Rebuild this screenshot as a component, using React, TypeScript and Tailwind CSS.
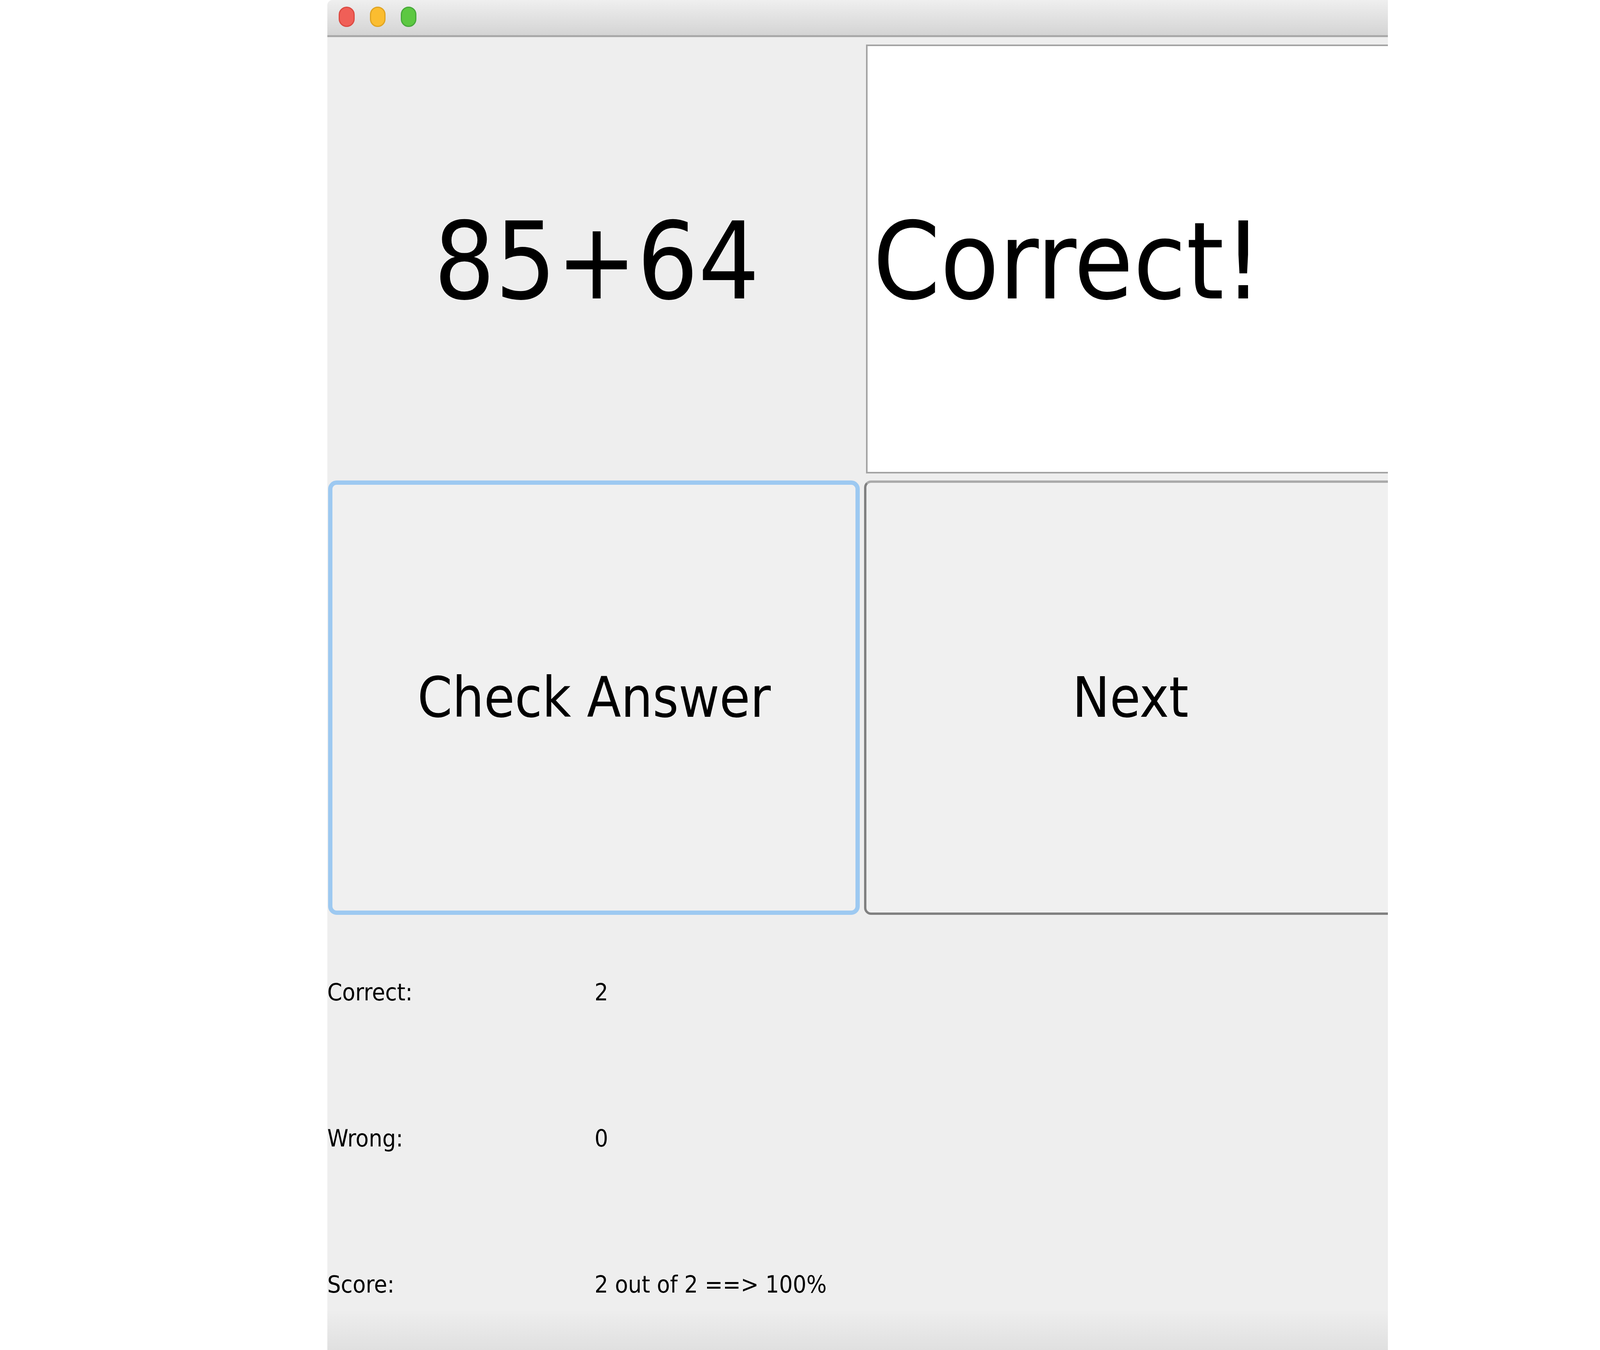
const font = "font-['DejaVu_Sans_Condensed',_'DejaVu_Sans',_'Liberation_Sans',_sans-serif]";

function TrafficLights() {
  return (
    <div className="flex w-full items-center gap-[1.45%] pl-[1.1%]">
      <span className="h-[52px] w-[1.5%] rounded-full border-[3px] border-[#dc4a42] bg-[#f05f57]" />
      <span className="h-[52px] w-[1.5%] rounded-full border-[3px] border-[#e0a422] bg-[#fbbd30]" />
      <span className="h-[52px] w-[1.5%] rounded-full border-[3px] border-[#47a93a] bg-[#5cc841]" />
    </div>
  );
}

function StatRow({ label, value }: { label: string; value: string }) {
  return (
    <div className="grid h-[374px] grid-cols-[25.2%_1fr] items-center text-[61px] text-black">
      <span>{label}</span>
      <span>{value}</span>
    </div>
  );
}

export default function App() {
  return (
    <div className={`flex h-screen w-full overflow-hidden bg-white ${font}`}>
      <div className="ml-[20.45%] flex h-full w-[66.3%] shrink-0 flex-col overflow-hidden rounded-tl-[14px] bg-[linear-gradient(to_bottom,#eeeeee_0%,#eeeeee_97%,#e0e0e0_100%)]">
        {/* title bar */}
        <div className="flex h-[95px] shrink-0 items-center border-b-[5px] border-[#a9a9a9] bg-[linear-gradient(to_bottom,#efefef,#d4d4d4)] pb-[4px]">
          <TrafficLights />
        </div>

        {/* question + feedback */}
        <div className="mt-[19px] flex h-[1098px] shrink-0">
          <div className="flex w-[50.8%] shrink-0 items-center justify-center pt-[14px] text-[274px] leading-none text-black">
            85+64
          </div>
          <div className="flex h-full w-[50.6%] shrink-0 items-center border-[4px] border-[#a3a3a3] bg-white pl-[0.5%] pt-[14px] text-[274px] leading-none text-black">
            Correct!
          </div>
        </div>

        {/* buttons */}
        <div className="mt-[18px] flex h-[1112px] shrink-0 gap-[0.4%] pl-[0.1%]">
          <button className="flex w-[50.17%] shrink-0 items-center justify-center rounded-[22px] border-[11px] border-[#9dc9f1] bg-[#f0f0f0] text-[142px] leading-none text-black">
            Check Answer
          </button>
          <button className="flex w-[50.26%] shrink-0 items-center justify-center rounded-[18px] border-[6px] border-[#808080] border-t-[#aaaaaa] bg-[#f0f0f0] text-[142px] leading-none text-black">
            Next
          </button>
        </div>

        {/* stats */}
        <div className="mt-[11px] flex flex-col">
          <StatRow label="Correct:" value="2" />
          <StatRow label="Wrong:" value="0" />
          <StatRow label="Score:" value="2 out of 2 ==> 100%" />
        </div>
      </div>
    </div>
  );
}
